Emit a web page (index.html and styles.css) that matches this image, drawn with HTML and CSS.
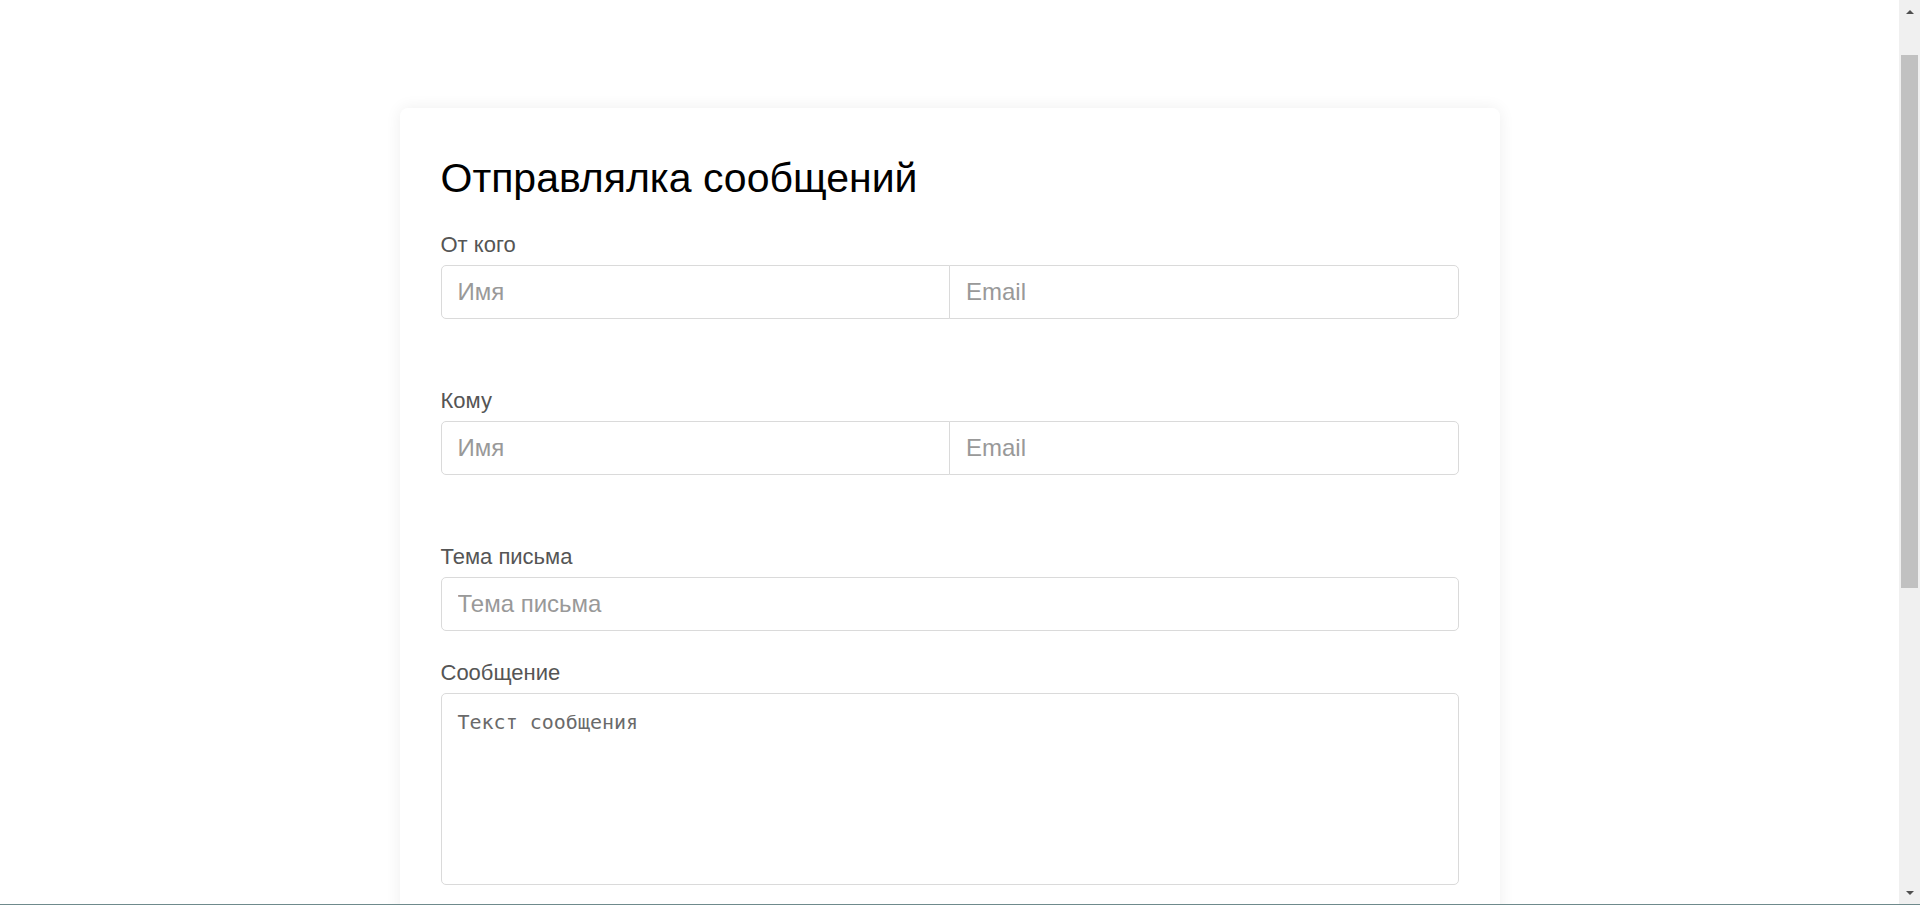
FILE: index.html
```html
<!DOCTYPE html>
<html lang="ru">
<head>
<meta charset="utf-8">
<title>Отправлялка сообщений</title>
<link rel="stylesheet" href="styles.css">
</head>
<body>
<main class="page">
  <section class="card">
    <h1 class="title">Отправлялка сообщений</h1>
    <form class="form">
      <div class="group group-pair">
        <label class="label">От кого</label>
        <div class="input-group">
          <input class="field field-left" type="text" placeholder="Имя">
          <input class="field field-right" type="email" placeholder="Email">
        </div>
      </div>
      <div class="group group-pair">
        <label class="label">Кому</label>
        <div class="input-group">
          <input class="field field-left" type="text" placeholder="Имя">
          <input class="field field-right" type="email" placeholder="Email">
        </div>
      </div>
      <div class="group group-subject">
        <label class="label">Тема письма</label>
        <input class="field" type="text" placeholder="Тема письма">
      </div>
      <div class="group group-message">
        <label class="label">Сообщение</label>
        <textarea class="field area" placeholder="Текст сообщения"></textarea>
      </div>
    </form>
  </section>
</main>
<div class="scrollbar" aria-hidden="true">
  <div class="scroll-btn"><span class="arrow arrow-up"></span></div>
  <div class="scroll-track"><div class="scroll-thumb"></div></div>
  <div class="scroll-btn"><span class="arrow arrow-down"></span></div>
</div>
<div class="screen-edge" aria-hidden="true"></div>
</body>
</html>
```

FILE: styles.css
```css
html, body {
  margin: 0;
  padding: 0;
  background: #ffffff;
}

body {
  font-family: "Liberation Sans", Arial, sans-serif;
  color: #212529;
}

.page {
  margin-right: 21px;
  padding: 108px 0 0;
}

.card {
  box-sizing: border-box;
  width: 1100px;
  margin: 0 auto;
  padding: 46px 41px 41px;
  background: #ffffff;
  border-radius: 8px;
  box-shadow: 0 0 16px rgba(0, 0, 0, 0.07);
}

.title {
  margin: 0 0 30px;
  font-size: 41px;
  line-height: 48px;
  font-weight: 400;
  color: #000000;
}

.form {
  display: flex;
  flex-direction: column;
}

.label {
  display: block;
  margin-bottom: 8px;
  font-size: 22px;
  line-height: 25px;
  color: #555555;
}

.group-pair {
  margin-bottom: 69px;
}

.group-subject {
  margin-bottom: 29px;
}

.input-group {
  display: flex;
}

.field {
  box-sizing: border-box;
  display: block;
  width: 100%;
  height: 54px;
  margin: 0;
  padding: 0 16px;
  font-family: "Liberation Sans", Arial, sans-serif;
  font-size: 24px;
  color: #495057;
  background: #ffffff;
  border: 1px solid #dadada;
  border-radius: 5px;
  outline: none;
}

.field::placeholder {
  color: #999999;
  opacity: 1;
}

.input-group .field {
  flex: 1 1 0;
  min-width: 0;
}

.field-left {
  border-top-right-radius: 0;
  border-bottom-right-radius: 0;
}

.field-right {
  margin-left: -1px;
  border-top-left-radius: 0;
  border-bottom-left-radius: 0;
}

.area {
  height: 192px;
  padding: 13px 16px;
  font-family: "DejaVu Sans Mono", "Liberation Mono", monospace;
  font-size: 20px;
  line-height: 30px;
  resize: none;
}

.area::placeholder {
  color: #6a6a6a;
}

/* replica of the window's scrollbar */
.scrollbar {
  position: fixed;
  top: 0;
  right: 0;
  bottom: 0;
  width: 21px;
  display: flex;
  flex-direction: column;
  background: #f0f0f0;
}

.scroll-btn {
  height: 17px;
  flex: none;
  display: flex;
  align-items: center;
  justify-content: center;
}

.arrow {
  width: 0;
  height: 0;
  border-left: 4px solid transparent;
  border-right: 4px solid transparent;
}

.arrow-up {
  border-bottom: 4px solid #505050;
  margin-top: 6px;
}

.arrow-down {
  border-top: 4px solid #505050;
  margin-bottom: 8px;
}

.scroll-track {
  flex: 1;
  padding: 38px 2px 0;
}

.scroll-thumb {
  height: 533px;
  background: #c1c1c1;
}

.screen-edge {
  position: fixed;
  left: 0;
  right: 0;
  bottom: 0;
  height: 1px;
  background: #6f8a8c;
}
```
